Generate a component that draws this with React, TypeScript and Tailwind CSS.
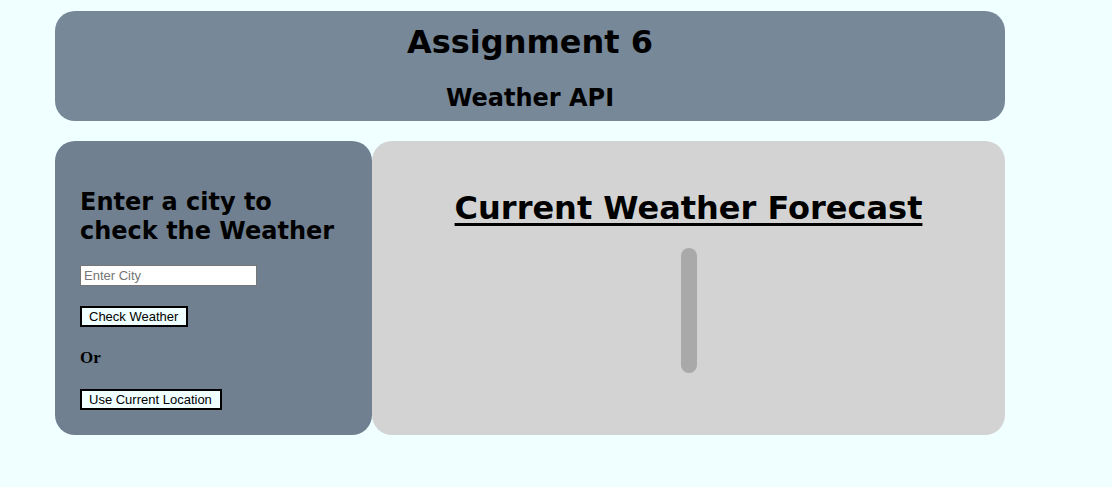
export default function App() {
  return (
    <div className="min-h-[487px] bg-[#f0ffff] pt-[11px] pl-[55px] text-black">
      <div className="w-[950px]">
        <header className="h-[110px] rounded-[20px] bg-[#778899] pt-[12px] text-center font-['DejaVu_Sans',sans-serif] font-bold">
          <h1 className="text-[32px] leading-[38px]">Assignment 6</h1>
          <h2 className="mt-[22px] text-[24px] leading-[30px]">Weather API</h2>
        </header>

        <div className="mt-5 grid h-[294px] grid-cols-[317px_1fr]">
          <div className="rounded-[20px] bg-[#708090] pl-[25px] pt-[47px]">
            <h3 className="font-['DejaVu_Sans',sans-serif] text-[24px] font-bold leading-[29px]">
              Enter a city to
              <br />
              check the Weather
            </h3>
            <input
              placeholder="Enter City"
              className="mt-[19px] block h-[21px] w-[177px] border border-[#767676] bg-white px-[3px] font-['Liberation_Sans',sans-serif] text-[13px] text-black outline-none placeholder:text-[#757575]"
            />
            <button className="mt-5 block h-[21px] border-2 border-black bg-[#f0ffff] pl-[7px] pr-[8px] font-['Liberation_Sans',sans-serif] text-[13px] leading-[17px]">
              Check Weather
            </button>
            <p className="mt-[20px] font-['Liberation_Serif',serif] text-[17px] font-bold leading-[22px]">
              Or
            </p>
            <button className="mt-[20px] block h-[21px] border-2 border-black bg-[#f0ffff] pl-[7px] pr-[8px] font-['Liberation_Sans',sans-serif] text-[13px] leading-[17px]">
              Use Current Location
            </button>
          </div>

          <div className="flex flex-col items-center rounded-[20px] bg-[#d3d3d3] pt-[48px]">
            <h2 className="font-['DejaVu_Sans',sans-serif] text-[32px] font-bold leading-[38px] underline underline-offset-[4px]">
              Current Weather Forecast
            </h2>
            <div className="mt-[21px] h-[125px] w-4 rounded-full bg-[#a9a9a9]" />
          </div>
        </div>
      </div>
    </div>
  );
}
